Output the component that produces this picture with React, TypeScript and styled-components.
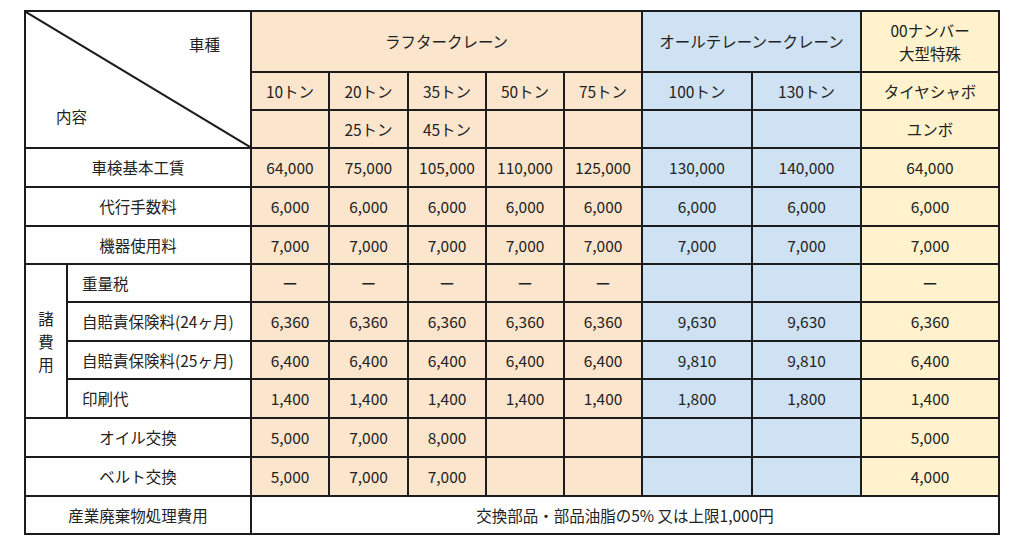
import React from "react";
import styled, { createGlobalStyle } from "styled-components";

const GlobalStyle = createGlobalStyle`
  html, body { margin: 0; padding: 0; background: #ffffff; }
  body { font-family: "Noto Sans CJK JP", "Noto Sans", sans-serif; }
`;

type Tone = "white" | "peach" | "blue" | "yellow";
const toneColor: Record<Tone, string> = {
  white: "#ffffff",
  peach: "#fce5cd",
  blue: "#cfe2f3",
  yellow: "#fff2cc",
};

const Page = styled.div`
  padding: 10px 0 0 24px;
`;

const Table = styled.table`
  border-collapse: collapse;
  table-layout: fixed;
  width: 976px;
  color: #222222;
  font-size: 15.5px;
  line-height: 23px;
`;

const Row = styled.tr<{ $h: number }>`
  height: ${(p) => p.$h}px;
`;

const Cell = styled.td<{ $tone?: Tone; $align?: "left" | "center" }>`
  border: 2px solid #1c1c1c;
  padding: 0 ${(p) => (p.$align === "left" ? "14px" : "0")};
  text-align: ${(p) => p.$align ?? "center"};
  vertical-align: middle;
  background: ${(p) => toneColor[p.$tone ?? "white"]};
  white-space: nowrap;
`;

const CornerCell = styled.td`
  border: 2px solid #1c1c1c;
  padding: 0;
  position: relative;
  background: #ffffff;
`;

const Corner = styled.div`
  height: 135px;
  box-sizing: border-box;
  padding: 21px 30px 19px 30px;
  display: flex;
  flex-direction: column;
  justify-content: space-between;
`;

const CornerLabel = styled.span<{ $side: "start" | "end" }>`
  align-self: ${(p) => (p.$side === "end" ? "flex-end" : "flex-start")};
`;

const Diagonal = styled.svg`
  position: absolute;
  inset: 0;
  width: 100%;
  height: 100%;
  pointer-events: none;
`;

const Stack = styled.div`
  display: flex;
  flex-direction: column;
  align-items: center;
  line-height: 23px;
`;

const widths = [42, 184, 78, 79, 78, 78, 78, 110, 109, 138];
const tones: Tone[] = ["peach", "peach", "peach", "peach", "peach", "blue", "blue", "yellow"];
const D = "ー";

type DataRow = { label: string; values: string[]; h: number };

const mainRows: DataRow[] = [
  { label: "車検基本工賃", values: ["64,000", "75,000", "105,000", "110,000", "125,000", "130,000", "140,000", "64,000"], h: 39 },
  { label: "代行手数料", values: ["6,000", "6,000", "6,000", "6,000", "6,000", "6,000", "6,000", "6,000"], h: 39 },
  { label: "機器使用料", values: ["7,000", "7,000", "7,000", "7,000", "7,000", "7,000", "7,000", "7,000"], h: 38 },
];

const subRows: DataRow[] = [
  { label: "重量税", values: [D, D, D, D, D, "", "", D], h: 38 },
  { label: "自賠責保険料(24ヶ月)", values: ["6,360", "6,360", "6,360", "6,360", "6,360", "9,630", "9,630", "6,360"], h: 39 },
  { label: "自賠責保険料(25ヶ月)", values: ["6,400", "6,400", "6,400", "6,400", "6,400", "9,810", "9,810", "6,400"], h: 38 },
  { label: "印刷代", values: ["1,400", "1,400", "1,400", "1,400", "1,400", "1,800", "1,800", "1,400"], h: 39 },
];

const tailRows: DataRow[] = [
  { label: "オイル交換", values: ["5,000", "7,000", "8,000", "", "", "", "", "5,000"], h: 39 },
  { label: "ベルト交換", values: ["5,000", "7,000", "7,000", "", "", "", "", "4,000"], h: 39 },
];

const Values: React.FC<{ values: string[] }> = ({ values }) => (
  <>
    {values.map((v, i) => (
      <Cell key={i} $tone={tones[i]}>
        {v}
      </Cell>
    ))}
  </>
);

export default function App() {
  return (
    <>
      <GlobalStyle />
      <Page>
        <Table>
          <colgroup>
            {widths.map((w, i) => (
              <col key={i} style={{ width: w }} />
            ))}
          </colgroup>
          <tbody>
            <Row $h={61}>
              <CornerCell rowSpan={3} colSpan={2}>
                <Diagonal viewBox="0 0 100 100" preserveAspectRatio="none">
                  <line x1="0" y1="0" x2="100" y2="100" stroke="#1c1c1c" strokeWidth="2" vectorEffect="non-scaling-stroke" />
                </Diagonal>
                <Corner>
                  <CornerLabel $side="end">車種</CornerLabel>
                  <CornerLabel $side="start">内容</CornerLabel>
                </Corner>
              </CornerCell>
              <Cell colSpan={5} $tone="peach">ラフタークレーン</Cell>
              <Cell colSpan={2} $tone="blue">オールテレーンークレーン</Cell>
              <Cell $tone="yellow">
                <Stack>
                  <span>00ナンバー</span>
                  <span>大型特殊</span>
                </Stack>
              </Cell>
            </Row>
            <Row $h={38}>
              <Values values={["10トン", "20トン", "35トン", "50トン", "75トン", "100トン", "130トン", "タイヤシャボ"]} />
            </Row>
            <Row $h={38}>
              <Values values={["", "25トン", "45トン", "", "", "", "", "ユンボ"]} />
            </Row>
            {mainRows.map((r) => (
              <Row key={r.label} $h={r.h}>
                <Cell colSpan={2}>{r.label}</Cell>
                <Values values={r.values} />
              </Row>
            ))}
            {subRows.map((r, idx) => (
              <Row key={r.label} $h={r.h}>
                {idx === 0 && (
                  <Cell rowSpan={subRows.length}>
                    <Stack>
                      <span>諸</span>
                      <span>費</span>
                      <span>用</span>
                    </Stack>
                  </Cell>
                )}
                <Cell $align="left">{r.label}</Cell>
                <Values values={r.values} />
              </Row>
            ))}
            {tailRows.map((r) => (
              <Row key={r.label} $h={r.h}>
                <Cell colSpan={2}>{r.label}</Cell>
                <Values values={r.values} />
              </Row>
            ))}
            <Row $h={38}>
              <Cell colSpan={2}>産業廃棄物処理費用</Cell>
              <Cell colSpan={8}>交換部品・部品油脂の5% 又は上限1,000円</Cell>
            </Row>
          </tbody>
        </Table>
      </Page>
    </>
  );
}
